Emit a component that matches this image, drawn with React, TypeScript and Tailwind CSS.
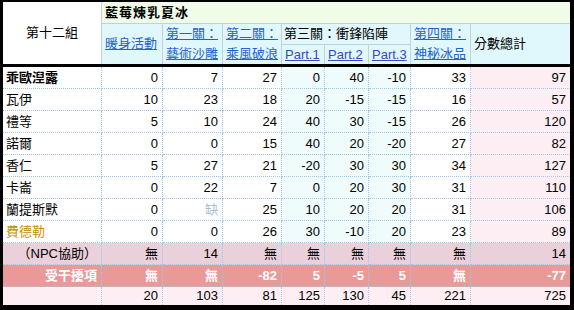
import React from "react";

type Row = { name: string; kind?: "bold" | "gold"; v: (number | string)[] };

const rows: Row[] = [
  { name: "乖歐湼露", kind: "bold", v: [0, 7, 27, 0, 40, -10, 33, 97] },
  { name: "瓦伊", v: [10, 23, 18, 20, -15, -15, 16, 57] },
  { name: "禮等", v: [5, 10, 24, 40, 30, -15, 26, 120] },
  { name: "諾爾", v: [0, 0, 15, 40, 20, -20, 27, 82] },
  { name: "香仁", v: [5, 27, 21, -20, 30, 30, 34, 127] },
  { name: "卡崙", v: [0, 22, 7, 0, 20, 30, 31, 110] },
  { name: "蘭提斯默", v: [0, "缺", 25, 10, 20, 20, 31, 106] },
  { name: "費德勒", kind: "gold", v: [0, 0, 26, 30, -10, 20, 23, 89] },
];

const npc = ["無", 14, "無", "無", "無", "無", "無", 14];
const intr = ["無", "無", -82, 5, -5, 5, "無", -77];
const total = [20, 103, 81, 125, 130, 45, 221, 725];

const hb = "border-r border-b border-solid border-[#bfd3da]";
const db = "border-r border-b border-dotted border-[#9fc5e8]";

function dataBg(i: number) {
  if (i >= 3 && i <= 5) return "bg-[#effcfb]";
  if (i === 7) return "bg-[#fdeef4] border-r-0";
  return "bg-white";
}

export default function App() {
  return (
    <div
      className="w-[574px] h-[310px] border-l-[3px] border-t-[2px] border-r-[4px] border-b-[5px] border-black bg-white text-[13px] text-black"
      style={{ fontFamily: '"Liberation Sans", "Noto Sans CJK TC", sans-serif' }}
    >
      <div className="grid grid-cols-[99px_61px_60px_59px_43px_44px_42px_60px_99px] grid-rows-[22px_21px_19px_3px_repeat(10,22px)_18px]">
        {/* header */}
        <div className={`row-span-3 flex items-center justify-center bg-white ${hb} border-b-0`}>第十二組</div>
        <div className={`col-span-8 flex items-center pl-[3px] bg-[#f0fce8] font-bold tracking-[1px] ${hb} border-r-0`}>
          藍莓煉乳夏冰
        </div>
        <div className={`row-span-2 flex items-center pl-[3px] bg-[#e0f7fb] ${hb} border-b-0`}>
          <a className="text-[#2463cc] underline">暖身活動</a>
        </div>
        <div className={`row-span-2 flex items-center pl-[3px] bg-[#e0f7fb] leading-[20px] ${hb} border-b-0`}>
          <a className="text-[#2463cc] underline">
            第一關：
            <br />
            藝術沙雕
          </a>
        </div>
        <div className={`row-span-2 flex items-center pl-[3px] bg-[#e0f7fb] leading-[20px] ${hb} border-b-0`}>
          <a className="text-[#2463cc] underline">
            第二關：
            <br />
            乘風破浪
          </a>
        </div>
        <div className={`col-span-3 flex items-center pl-[2px] bg-[#e0f7fb] ${hb}`}>第三關：衝鋒陷陣</div>
        <div className={`row-span-2 flex items-center pl-[3px] bg-[#e0f7fb] leading-[20px] ${hb} border-b-0`}>
          <a className="text-[#2463cc] underline">
            第四關：
            <br />
            神秘冰品
          </a>
        </div>
        <div className={`row-span-2 flex items-center pl-[3px] bg-[#e0f7fb] ${hb} border-r-0 border-b-0`}>分數總計</div>
        <div className={`flex items-center pl-[3px] bg-[#e0f7fb] ${hb} border-b-0`}>
          <a className="text-[#3a47c4] underline">Part.1</a>
        </div>
        <div className={`flex items-center pl-[3px] bg-[#e0f7fb] ${hb} border-b-0`}>
          <a className="text-[#3a47c4] underline">Part.2</a>
        </div>
        <div className={`flex items-center pl-[3px] bg-[#e0f7fb] ${hb} border-b-0`}>
          <a className="text-[#3a47c4] underline">Part.3</a>
        </div>
        <div className="col-span-9 bg-black" />

        {/* data rows */}
        {rows.map((r) => (
          <React.Fragment key={r.name}>
            <div
              className={`flex items-center pl-[3px] bg-white ${db} ${
                r.kind === "bold" ? "font-bold" : r.kind === "gold" ? "text-[#bf9000]" : ""
              }`}
            >
              {r.name}
            </div>
            {r.v.map((x, i) => (
              <div
                key={i}
                className={`flex items-center justify-end pr-[4px] ${db} ${dataBg(i)} ${
                  x === "缺" ? "text-[#a7bfd6]" : ""
                }`}
              >
                {x}
              </div>
            ))}
          </React.Fragment>
        ))}

        {/* NPC row */}
        <div className={`flex items-center justify-end pr-[4px] bg-[#e9d0da] ${db}`}>（NPC協助）</div>
        {npc.map((x, i) => (
          <div
            key={"n" + i}
            className={`flex items-center justify-end pr-[4px] bg-[#e9d0da] ${db} ${i === 7 ? "border-r-0" : ""}`}
          >
            {x}
          </div>
        ))}

        {/* interference row */}
        <div className={`flex items-center justify-end pr-[4px] bg-[#ea9999] font-bold text-white ${db}`}>受干擾項</div>
        {intr.map((x, i) => (
          <div
            key={"i" + i}
            className={`flex items-center justify-end pr-[4px] bg-[#ea9999] font-bold text-white ${db} ${
              i === 7 ? "border-r-0" : ""
            }`}
          >
            {x}
          </div>
        ))}

        {/* total row */}
        <div className={`bg-[#fdeef4] border-r border-dotted border-[#9fc5e8]`} />
        {total.map((x, i) => (
          <div
            key={"t" + i}
            className={`flex items-center justify-end pr-[4px] bg-[#fdeef4] ${
              i === 7 ? "" : "border-r border-dotted border-[#9fc5e8]"
            }`}
          >
            {x}
          </div>
        ))}
      </div>
    </div>
  );
}
